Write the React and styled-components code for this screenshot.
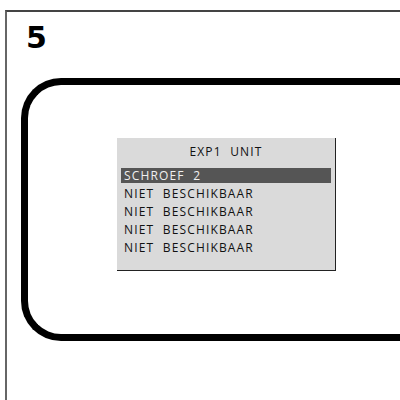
import React from 'react'
import styled, {createGlobalStyle} from 'styled-components'

const Global = createGlobalStyle`
  html, body {
    margin: 0;
    padding: 0;
    background: #fff;
    overflow: hidden;
  }
  body {
    width: 400px;
    height: 400px;
  }
`

const rows = [
  {label: 'SCHROEF  2', active: true},
  {label: 'NIET  BESCHIKBAAR'},
  {label: 'NIET  BESCHIKBAAR'},
  {label: 'NIET  BESCHIKBAAR'},
  {label: 'NIET  BESCHIKBAAR'},
]

const App = () => {
  return (
    <>
      <Global />
      <Frame>
        <StepNumber>5</StepNumber>
        <Device>
          <Screen>
            <ScreenTitle>EXP1  UNIT</ScreenTitle>
            {rows.map((r, i) => (
              <Row key={i} $active={r.active}>{r.label}</Row>
            ))}
          </Screen>
        </Device>
      </Frame>
    </>
  )
}

export default App

const Frame = styled.div`
  margin: 10px 0 0 5px;
  width: 395px;
  height: 390px;
  box-sizing: border-box;
  border-top: 2px solid #444;
  border-left: 2px solid #666;
  display: flex;
  flex-direction: column;
  overflow: hidden;
`

const StepNumber = styled.div`
  font-family: "DejaVu Sans", sans-serif;
  font-weight: bold;
  font-size: 30px;
  line-height: 30px;
  color: #000;
  padding: 11px 0 0 19px;
`

const Device = styled.div`
  margin: 25px 0 0 14px;
  width: 420px;
  height: 263px;
  flex-shrink: 0;
  box-sizing: border-box;
  border: 7px solid #000;
  border-right: none;
  border-radius: 40px 0 0 40px;
  padding: 53px 0 0 89px;
`

const Screen = styled.div`
  width: 219px;
  height: 133px;
  box-sizing: border-box;
  background: #dadada;
  border-right: 1px solid #222;
  border-bottom: 1px solid #222;
  padding: 5px 4px 0 4px;
  font-family: "Open Sans", sans-serif;
  font-size: 12px;
  letter-spacing: 1.15px;
  white-space: pre;
`

const ScreenTitle = styled.div`
  height: 18px;
  line-height: 18px;
  text-align: center;
  color: #111;
  margin-bottom: 7px;
`

const Row = styled.div`
  height: 15px;
  line-height: 15px;
  margin-bottom: 3px;
  padding-left: 3px;
  background: ${p => (p.$active ? '#555' : 'transparent')};
  color: ${p => (p.$active ? '#f0f0f0' : '#111')};
`
